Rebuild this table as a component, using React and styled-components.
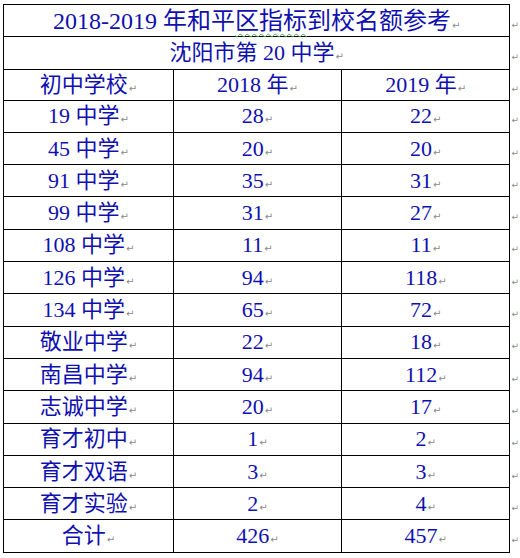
import React from 'react';
import styled, { createGlobalStyle } from 'styled-components';

const schools = [
  ['19 中学', '28', '22'],
  ['45 中学', '20', '20'],
  ['91 中学', '35', '31'],
  ['99 中学', '31', '27'],
  ['108 中学', '11', '11'],
  ['126 中学', '94', '118'],
  ['134 中学', '65', '72'],
  ['敬业中学', '22', '18'],
  ['南昌中学', '94', '112'],
  ['志诚中学', '20', '17'],
  ['育才初中', '1', '2'],
  ['育才双语', '3', '3'],
  ['育才实验', '2', '4'],
  ['合计', '426', '457']
];

export default function App() {
  return (
    <Page>
      <GlobalStyle />
      <Sheet>
        <colgroup>
          <col style={{ width: 171 }} />
          <col style={{ width: 170 }} />
          <col style={{ width: 170 }} />
          <col style={{ width: 6 }} />
        </colgroup>
        <tbody>
          <Row>
            <Cell colSpan={3} $size={24}>
              2018-2019 年和平<Squiggle>区指标</Squiggle>到校名额参考<Mark>↵</Mark>
            </Cell>
            <RowEnd><EndMark>↵</EndMark></RowEnd>
          </Row>
          <Row>
            <Cell colSpan={3}>
              沈阳市第 20 中学<Mark>↵</Mark>
            </Cell>
            <RowEnd><EndMark>↵</EndMark></RowEnd>
          </Row>
          <Row $short>
            <Cell>初中学校<Mark>↵</Mark></Cell>
            <Cell>2018 年<Mark>↵</Mark></Cell>
            <Cell>2019 年<Mark>↵</Mark></Cell>
            <RowEnd><EndMark>↵</EndMark></RowEnd>
          </Row>
          {schools.map(([name, a, b]) => (
            <Row key={name}>
              <Cell>{name}<Mark>↵</Mark></Cell>
              <Cell>{a}<Mark>↵</Mark></Cell>
              <Cell>{b}<Mark>↵</Mark></Cell>
              <RowEnd><EndMark>↵</EndMark></RowEnd>
            </Row>
          ))}
        </tbody>
      </Sheet>
    </Page>
  );
}

const GlobalStyle = createGlobalStyle`
  html, body {
    margin: 0;
    padding: 0;
    background: #fff;
  }
`;

const Page = styled.div`
  width: 520px;
  height: 558px;
  padding: 4px 0 0 3px;
  box-sizing: border-box;
  background: #fff;
  overflow: hidden;
`;

const Sheet = styled.table`
  border-collapse: collapse;
  table-layout: fixed;
  font-family: 'Liberation Serif', 'Noto Sans CJK SC', serif;
  font-size: 22px;
  color: #1010b0;
`;

const Row = styled.tr`
  height: ${props => (props.$short ? '31px' : '32.3px')};
`;

const Cell = styled.td`
  border: 1px solid #000;
  padding: 0;
  text-align: center;
  vertical-align: middle;
  line-height: 1;
  white-space: nowrap;
  font-size: ${props => (props.$size ? `${props.$size}px` : 'inherit')};
`;

const RowEnd = styled.td`
  border: none;
  padding: 0 0 0 1px;
  vertical-align: middle;
`;

const Mark = styled.span`
  font-family: 'DejaVu Sans', sans-serif;
  font-size: 10px;
  color: #8a8a8a;
  margin-left: 1px;
`;

const EndMark = styled.span`
  display: block;
  font-family: 'DejaVu Sans', sans-serif;
  font-size: 9px;
  color: #8a8a8a;
  margin-top: 8px;
`;

const Squiggle = styled.span`
  text-decoration: underline wavy #4caf50;
  text-decoration-thickness: 1px;
  text-underline-offset: 4px;
`;
